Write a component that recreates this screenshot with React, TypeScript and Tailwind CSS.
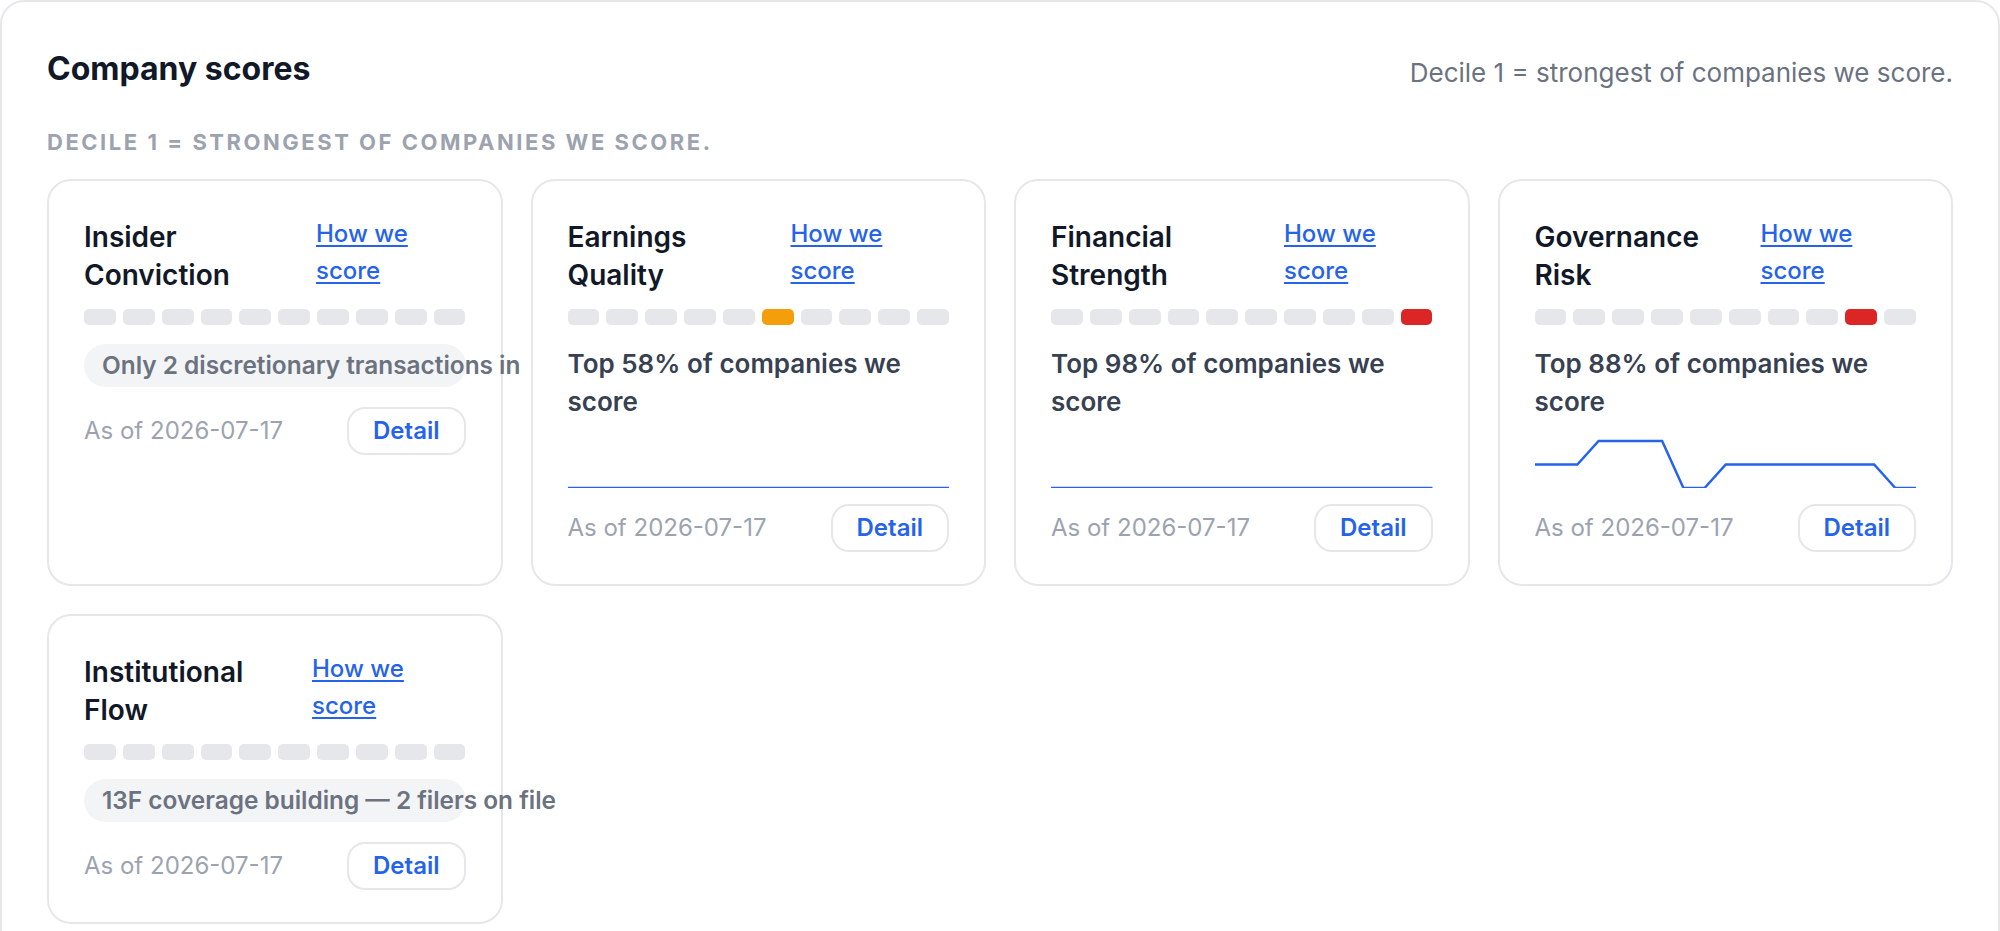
import React from 'react';

type Score = {
  title: string;
  titleW: string;
  active: number;
  activeColor: string;
  pct?: number;
  series?: number[];
  pill?: string;
};

const flat = Array.from({ length: 19 }, () => 5);

const scores: Score[] = [
  { title: 'Insider Conviction', titleW: 'w-[208px]', active: -1, activeColor: '', pill: 'Only 2 discretionary transactions in' },
  { title: 'Earnings Quality', titleW: 'w-[199px]', active: 5, activeColor: 'bg-[#f59e0b]', pct: 58, series: flat },
  { title: 'Financial Strength', titleW: 'w-[209px]', active: 9, activeColor: 'bg-[#dc2626]', pct: 98, series: flat },
  {
    title: 'Governance Risk',
    titleW: 'w-[202px]',
    active: 8,
    activeColor: 'bg-[#dc2626]',
    pct: 88,
    series: [2, 2, 2, 3, 3, 3, 3, 1, 1, 2, 2, 2, 2, 2, 2, 2, 2, 1, 1],
  },
  { title: 'Institutional Flow', titleW: 'w-[204px]', active: -1, activeColor: '', pill: '13F coverage building — 2 filers on file' },
];

function Sparkline({ data }: { data: number[] }) {
  const W = 382;
  const H = 50;
  const min = Math.min(...data);
  const max = Math.max(...data);
  const range = max - min || 1;
  const pts = data
    .map((v, i) => {
      const x = (i / (data.length - 1)) * W;
      const y = H - ((v - min) / range) * (H - 3);
      return `${x.toFixed(1)},${y.toFixed(1)}`;
    })
    .join(' ');
  return (
    <svg viewBox={`0 0 ${W} ${H}`} preserveAspectRatio="none" className="mt-[17px] block h-[50px] w-full">
      <polyline points={pts} fill="none" stroke="#2563eb" strokeWidth="2.5" />
    </svg>
  );
}

function DecileBar({ active, color }: { active: number; color: string }) {
  return (
    <div className="mt-[15px] flex gap-[7px]">
      {Array.from({ length: 10 }).map((_, i) => (
        <div key={i} className={`h-[16px] flex-1 rounded-[5px] ${i === active ? color : 'bg-[#e5e7eb]'}`} />
      ))}
    </div>
  );
}

function ScoreCard({ s }: { s: Score }) {
  return (
    <div className="flex flex-col rounded-[24px] border-2 border-[#e5e7eb] bg-white px-[35px] pb-[32px] pt-[37px]">
      <div className="flex items-start gap-6">
        <h3 className={`${s.titleW} shrink-0 text-[28px] font-semibold leading-[38px] text-[#111827]`}>{s.title}</h3>
        <a href="#" className="-mt-[3px] w-[120px] text-[24px] font-medium leading-[37px] text-[#2563eb] underline underline-offset-[3px]">
          How we score
        </a>
      </div>

      <DecileBar active={s.active} color={s.activeColor} />

      {s.pill ? (
        <div className="mt-[19px] flex h-[43px] items-center whitespace-nowrap rounded-full bg-[#f3f4f6] pl-[18px] text-[24.4px] font-semibold text-[#6b7280]">
          {s.pill}
        </div>
      ) : (
        <>
          <p className="mt-[20px] text-[26px] font-semibold leading-[38px] text-[#374151]">
            Top {s.pct}% of companies we score
          </p>
          {s.series && <Sparkline data={s.series} />}
        </>
      )}

      <div className={`flex items-center justify-between ${s.pill ? 'mt-[20px]' : 'mt-[16px]'}`}>
        <span className="text-[24px] text-[#9ca3af]">As of 2026-07-17</span>
        <button className="h-[48px] rounded-[18px] border-2 border-[#e5e7eb] px-[24px] text-[24px] font-semibold text-[#2563eb]">
          Detail
        </button>
      </div>
    </div>
  );
}

export default function App() {
  return (
    <div className="min-h-screen bg-white font-['Inter','Noto_Sans',sans-serif]">
      <section className="rounded-[24px] border-2 border-[#e5e7eb] px-[45px] pb-[48px] pt-[48px]">
        <div className="flex items-start justify-between">
          <h2 className="text-[32px] font-bold leading-[38px] text-[#111827]">Company scores</h2>
          <p className="pt-[6px] text-[26px] leading-[34px] text-[#6b7280]">Decile 1 = strongest of companies we score.</p>
        </div>
        <p className="mt-[37px] text-[22px] font-bold uppercase leading-[30px] tracking-[0.115em] text-[#9ca3af]">
          Decile 1 = strongest of companies we score.
        </p>
        <div className="mt-[22px] grid grid-cols-4 gap-[28px]">
          {scores.map(s => (
            <ScoreCard key={s.title} s={s} />
          ))}
        </div>
      </section>
    </div>
  );
}
